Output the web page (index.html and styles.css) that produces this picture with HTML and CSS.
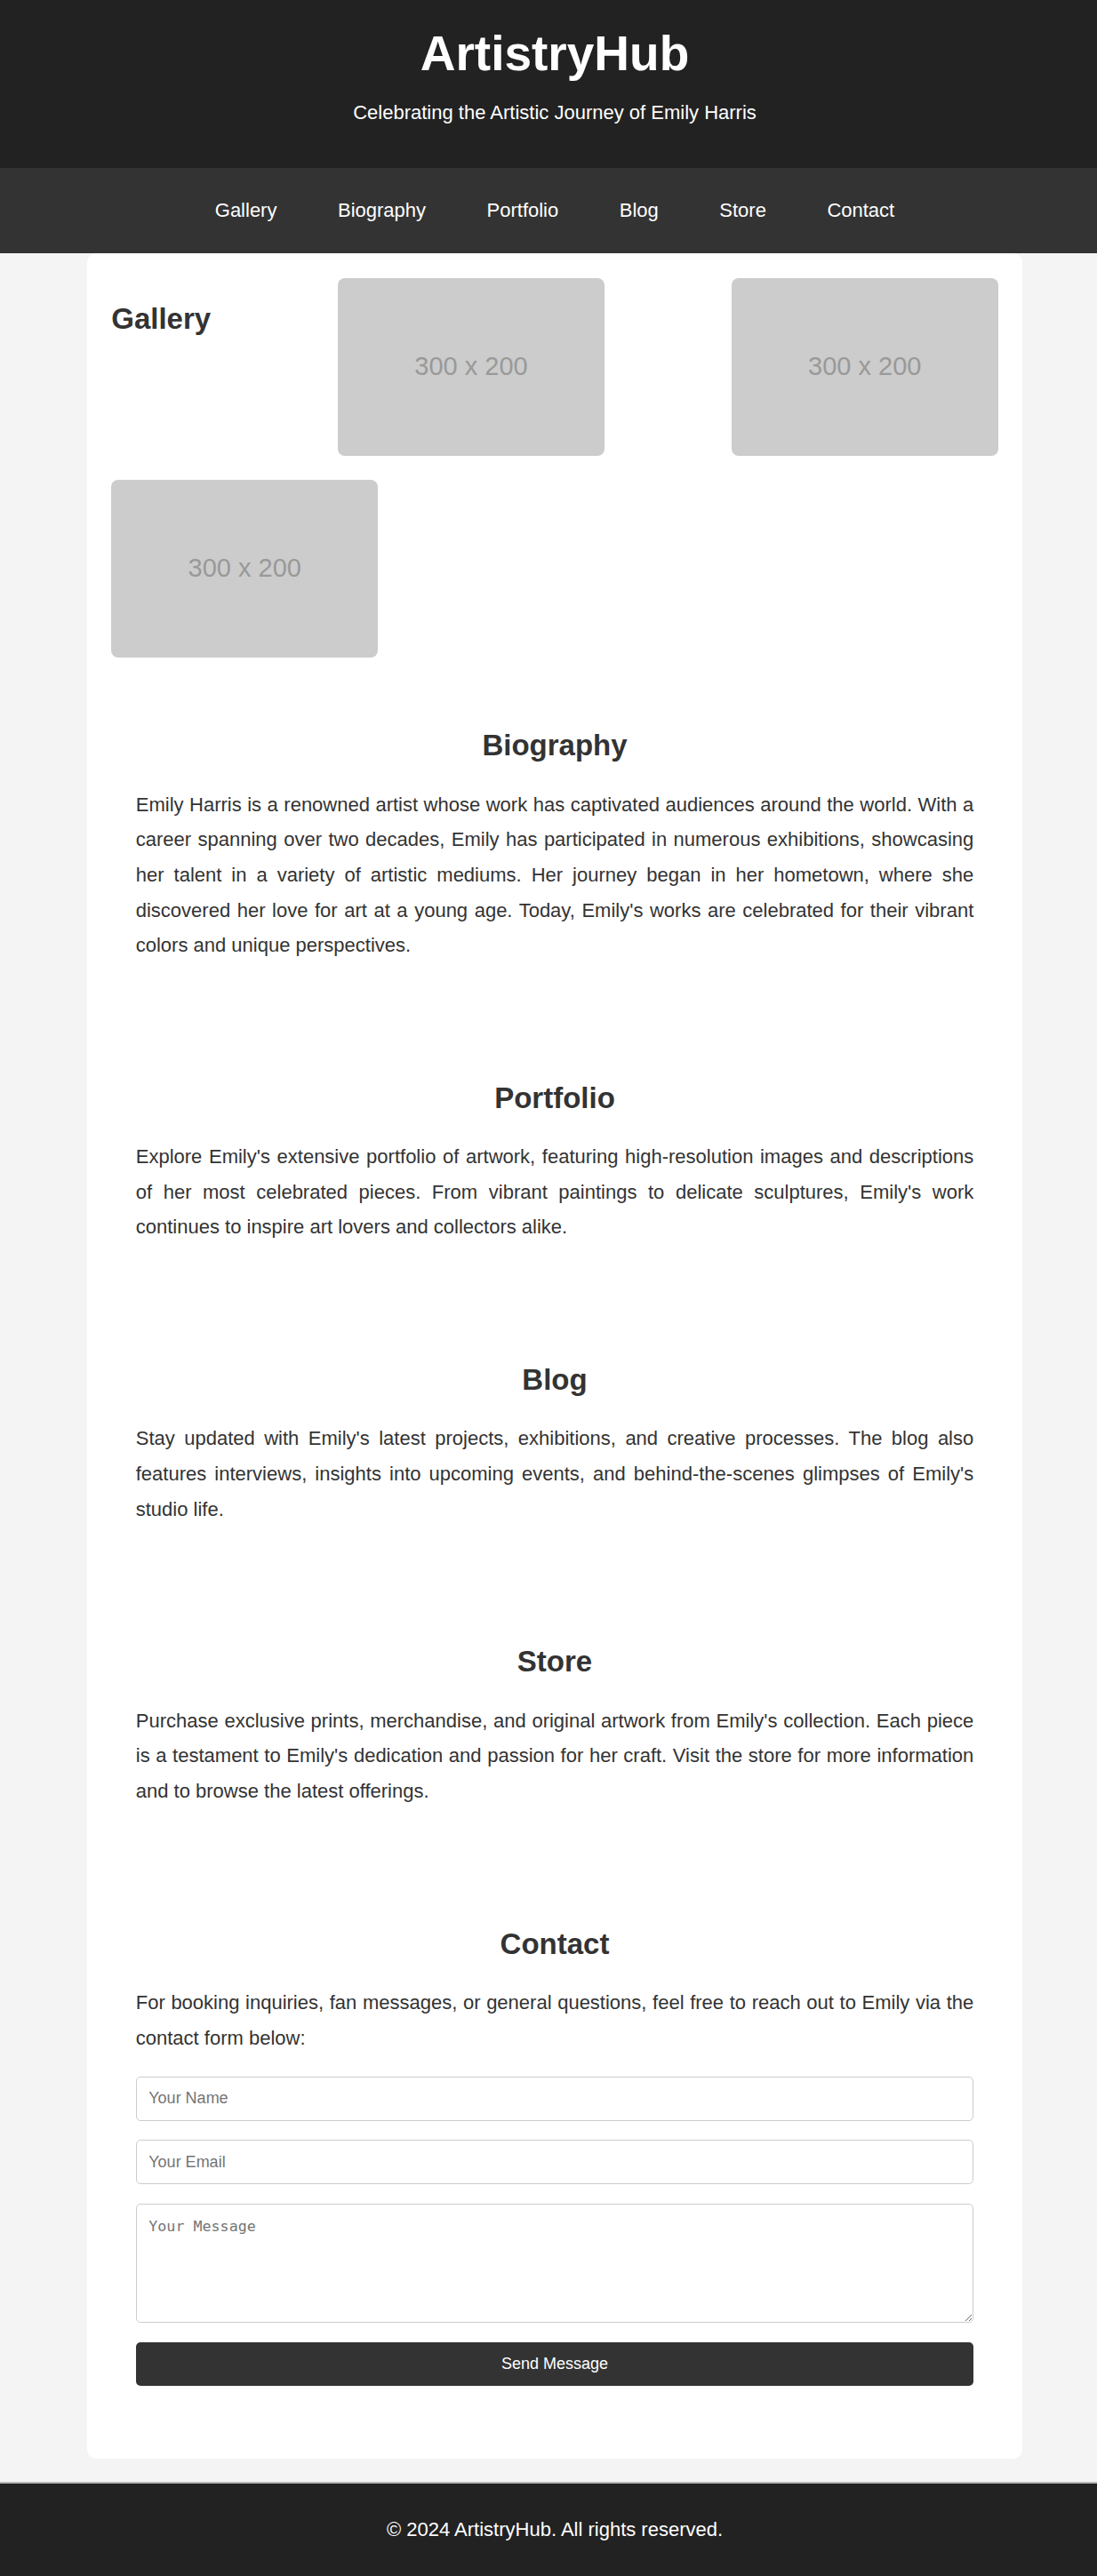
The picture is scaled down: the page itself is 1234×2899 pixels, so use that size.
FILE: index.html
```html
<!DOCTYPE html>
<html lang="en">
<head>
<meta charset="utf-8">
<title>ArtistryHub</title>
<link rel="stylesheet" href="styles.css">
</head>
<body>
<header class="site-header">
  <h1 class="site-title">ArtistryHub</h1>
  <p class="site-tagline">Celebrating the Artistic Journey of Emily Harris</p>
</header>
<nav class="site-nav">
  <a href="#gallery">Gallery</a>
  <a href="#biography">Biography</a>
  <a href="#portfolio">Portfolio</a>
  <a href="#blog">Blog</a>
  <a href="#store">Store</a>
  <a href="#contact">Contact</a>
</nav>
<main class="content-card">
  <section class="gallery" id="gallery">
    <h2 class="gallery-title">Gallery</h2>
    <div class="placeholder">300 x 200</div>
    <div class="placeholder">300 x 200</div>
    <div class="placeholder">300 x 200</div>
  </section>
  <section class="text-section" id="biography">
    <h2>Biography</h2>
    <p>Emily Harris is a renowned artist whose work has captivated audiences around the world. With a career spanning over two decades, Emily has participated in numerous exhibitions, showcasing her talent in a variety of artistic mediums. Her journey began in her hometown, where she discovered her love for art at a young age. Today, Emily's works are celebrated for their vibrant colors and unique perspectives.</p>
  </section>
  <section class="text-section" id="portfolio">
    <h2>Portfolio</h2>
    <p>Explore Emily's extensive portfolio of artwork, featuring high-resolution images and descriptions of her most celebrated pieces. From vibrant paintings to delicate sculptures, Emily's work continues to inspire art lovers and collectors alike.</p>
  </section>
  <section class="text-section" id="blog">
    <h2>Blog</h2>
    <p>Stay updated with Emily's latest projects, exhibitions, and creative processes. The blog also features interviews, insights into upcoming events, and behind-the-scenes glimpses of Emily's studio life.</p>
  </section>
  <section class="text-section" id="store">
    <h2>Store</h2>
    <p>Purchase exclusive prints, merchandise, and original artwork from Emily's collection. Each piece is a testament to Emily's dedication and passion for her craft. Visit the store for more information and to browse the latest offerings.</p>
  </section>
  <section class="text-section last-section" id="contact">
    <h2>Contact</h2>
    <p>For booking inquiries, fan messages, or general questions, feel free to reach out to Emily via the contact form below:</p>
    <form class="contact-form">
      <input class="field" type="text" placeholder="Your Name">
      <input class="field" type="email" placeholder="Your Email">
      <textarea class="field message" placeholder="Your Message"></textarea>
      <button class="send-btn" type="button">Send Message</button>
    </form>
  </section>
</main>
<footer class="site-footer">
  <p>&copy; 2024 ArtistryHub. All rights reserved.</p>
</footer>
</body>
</html>
```
FILE: styles.css
```css
html {
  overflow-x: hidden;
}

body {
  margin: 0 -14px 0 0;
  font-family: "Liberation Sans", Arial, sans-serif;
  font-size: 22px;
  color: #333;
  background: #f4f4f4;
}

.site-header {
  background: #222;
  color: #fff;
  text-align: center;
  padding: 27.5px 0;
}

.site-title {
  margin: 0;
  font-size: 55px;
  font-weight: bold;
}

.site-tagline {
  margin: 22px 0;
  font-size: 22px;
}

.site-nav {
  background: #333;
  display: flex;
  justify-content: center;
  gap: 68.5px;
  padding: 35px 0;
}

.site-nav a {
  color: #fff;
  text-decoration: none;
  font-size: 22px;
}

.content-card {
  display: block;
  box-sizing: border-box;
  width: 1052.5px;
  margin: 0 auto 26.5px;
  padding: 27.5px;
  background: #fff;
  border-radius: 10px;
}

.gallery {
  display: flex;
  flex-wrap: wrap;
  justify-content: space-between;
  align-items: flex-start;
  row-gap: 27px;
  margin-bottom: 26px;
}

.gallery-title {
  margin: 27.4px 0;
  font-size: 33px;
}

.placeholder {
  width: 300px;
  height: 200px;
  border-radius: 8px;
  background: #cccccc;
  color: #999;
  font-size: 29px;
  display: flex;
  align-items: center;
  justify-content: center;
}

.text-section {
  padding: 27.5px;
  margin-bottom: 28.7px;
}

.text-section.last-section {
  margin-bottom: 27px;
}

.text-section h2 {
  font-size: 33px;
  margin: 27.4px 0;
  text-align: center;
}

.text-section p {
  margin: 22px 0;
  line-height: 1.8;
  text-align: justify;
}

.contact-form {
  display: flex;
  flex-direction: column;
  gap: 21.6px;
  padding-top: 1.7px;
}

.field {
  box-sizing: border-box;
  width: 100%;
  height: 50px;
  padding: 13.5px;
  border: 1px solid #ccc;
  border-radius: 5px;
  font-family: "Liberation Sans", Arial, sans-serif;
  font-size: 18px;
  color: #333;
  background: #fff;
  margin: 0;
}

.field.message {
  height: 134px;
  font-family: "DejaVu Sans Mono", monospace;
  font-size: 16.7px;
}

.send-btn {
  height: 49px;
  width: 100%;
  border: none;
  border-radius: 5px;
  background: #333;
  color: #fff;
  font-family: "Liberation Sans", Arial, sans-serif;
  font-size: 18px;
  margin: 0;
}

.site-footer {
  background: #222;
  color: #fff;
  text-align: center;
  border-top: 2px solid #b8b8b8;
  padding: 39px 0 40px;
}

.site-footer p {
  margin: 0;
  font-size: 22px;
}
```
